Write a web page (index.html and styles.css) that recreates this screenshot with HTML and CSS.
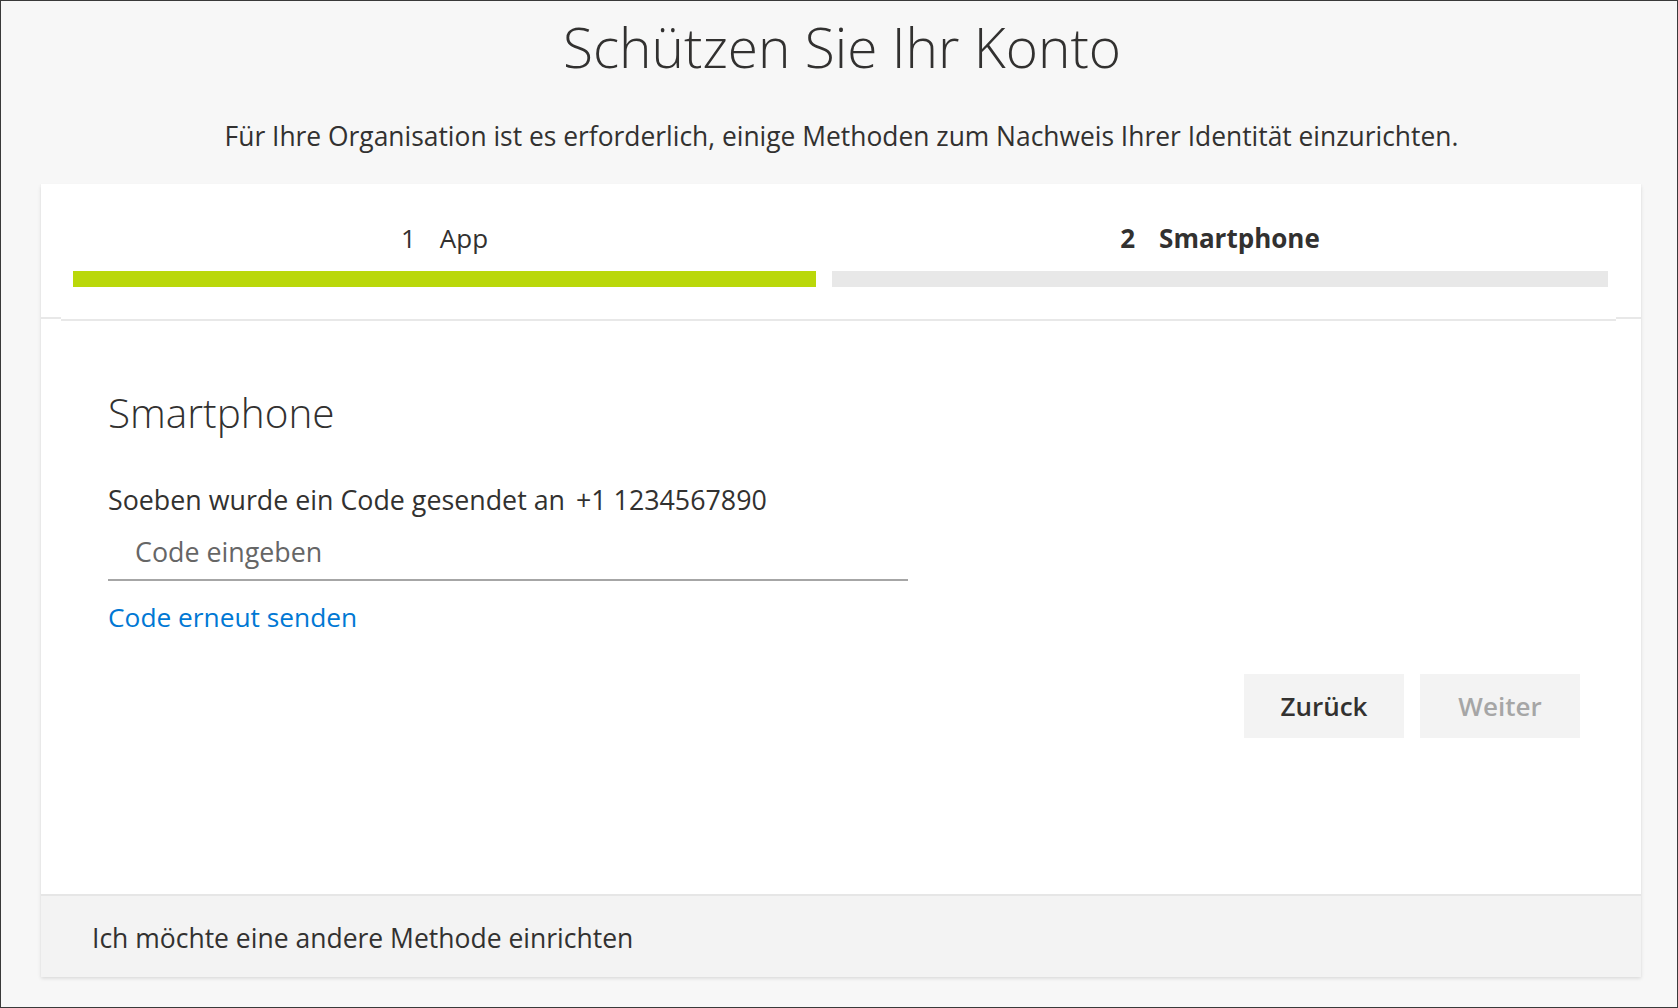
FILE: index.html
```html
<!DOCTYPE html>
<html lang="de">
<head>
<meta charset="utf-8">
<title>Schützen Sie Ihr Konto</title>
<link rel="stylesheet" href="styles.css">
</head>
<body>
<div class="page">
  <h1 class="title">Schützen Sie Ihr Konto</h1>
  <p class="subtitle">Für Ihre Organisation ist es erforderlich, einige Methoden zum Nachweis Ihrer Identität einzurichten.</p>
  <div class="card">
    <div class="steps">
      <div class="step step-done">
        <div class="step-label"><span class="step-num">1</span><span>App</span></div>
        <div class="step-bar"></div>
      </div>
      <div class="step step-current">
        <div class="step-label"><span class="step-num">2</span><span>Smartphone</span></div>
        <div class="step-bar"></div>
      </div>
    </div>
    <div class="sep"><span class="sep-side"></span><span class="sep-mid"></span><span class="sep-side sep-right"></span></div>
    <div class="content">
      <h2 class="heading">Smartphone</h2>
      <p class="sent">Soeben wurde ein Code gesendet an <span class="phone">+1 1234567890</span></p>
      <div class="field"><input class="code-input" type="text" placeholder="Code eingeben"></div>
      <a class="link" href="#">Code erneut senden</a>
      <div class="actions">
        <button class="btn" type="button">Zurück</button>
        <button class="btn btn-disabled" type="button" disabled>Weiter</button>
      </div>
    </div>
    <div class="footer">Ich möchte eine andere Methode einrichten</div>
  </div>
</div>
</body>
</html>
```
FILE: styles.css
```css
* { box-sizing: border-box; }
html, body { margin: 0; padding: 0; }
body {
  font-family: "Open Sans", "Noto Sans", sans-serif;
  color: #323130;
}
.page {
  width: 1678px;
  height: 1008px;
  border: 1px solid #3a3a3a;
  background: #f7f7f7;
  overflow: hidden;
}
.title {
  margin: 14px 0 0;
  padding-left: 6px;
  font-size: 55px;
  line-height: 64px;
  font-weight: 300;
  text-align: center;
  color: #323130;
}
.subtitle {
  margin: 39px 0 0;
  padding-left: 5px;
  font-size: 26.4px;
  line-height: 36px;
  font-weight: 400;
  text-align: center;
  color: #323130;
}
.card {
  margin: 30px 0 0 40px;
  width: 1600px;
  background: #fff;
  box-shadow: 0 1.6px 3.6px rgba(0,0,0,0.13), 0 0.3px 0.9px rgba(0,0,0,0.11);
}
.steps {
  display: grid;
  grid-template-columns: 743fr 776fr;
  column-gap: 16px;
  padding: 36px 33px 30px 32px;
}
.step-label {
  text-align: center;
  font-size: 26px;
  line-height: 36px;
  color: #323130;
}
.step-num { margin-right: 24px; }
.step-current .step-label { font-weight: 700; }
.step-bar {
  margin-top: 15px;
  height: 16px;
  background: #e8e8e8;
}
.step-done .step-bar { background: #bad80a; }
.sep {
  display: flex;
  height: 4px;
}
.sep-side {
  width: 20px;
  height: 2px;
  background: #e8e8e8;
}
.sep-right { width: 25px; }
.sep-mid {
  flex: 1;
  height: 2px;
  margin-top: 2px;
  background: #e8e8e8;
}
.content {
  padding: 66px 61px 156px 67px;
}
.heading {
  margin: 0;
  font-size: 40.5px;
  line-height: 52px;
  font-weight: 300;
  color: #323130;
}
.sent {
  margin: 43px 0 0;
  font-size: 26.8px;
  line-height: 36px;
  color: #323130;
}
.phone { margin-left: 4px; }
.field {
  margin-top: 5px;
  width: 800px;
}
.code-input {
  display: block;
  width: 100%;
  height: 58px;
  margin: 0;
  padding: 0 0 0 27px;
  border: 0;
  border-bottom: 2px solid #a6a6a6;
  background: transparent;
  font-family: "Open Sans", "Noto Sans", sans-serif;
  font-size: 26.8px;
  color: #323130;
  outline: none;
}
.code-input::placeholder { color: #666; opacity: 1; }
.link {
  display: inline-block;
  margin-top: 18px;
  font-size: 26.3px;
  line-height: 36px;
  color: #0078d4;
  text-decoration: none;
}
.actions {
  display: flex;
  justify-content: flex-end;
  gap: 16px;
  margin-top: 39px;
}
.btn {
  width: 160px;
  height: 64px;
  border: 0;
  background: #f3f3f3;
  font-family: "Open Sans", "Noto Sans", sans-serif;
  font-size: 26px;
  font-weight: 600;
  color: #323130;
  padding: 0;
}
.btn-disabled { color: #a6a6a6; }
.footer {
  border-top: 2px solid #e6e6e6;
  background: #f3f3f3;
  padding: 24px 51px 21px;
  font-size: 26.5px;
  line-height: 36px;
  color: #323130;
}
```
